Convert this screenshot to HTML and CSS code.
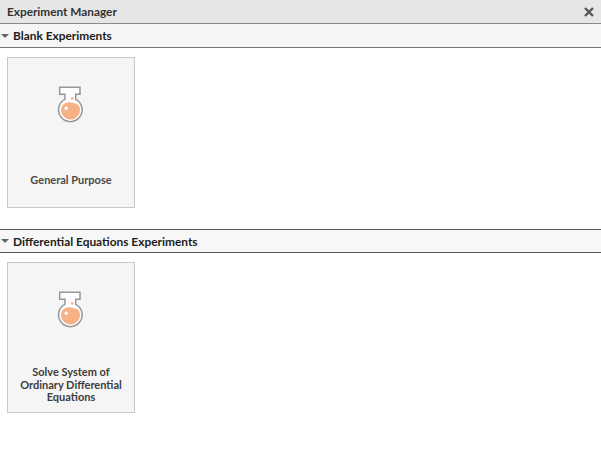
FILE: index.html
```
<!DOCTYPE html>
<html lang="en">
<head>
<meta charset="utf-8">
<title>Experiment Manager</title>
<link rel="stylesheet" href="styles.css">
</head>
<body>
<header class="titlebar">
  <span class="title">Experiment Manager</span>
  <svg class="close" width="10" height="10" viewBox="0 0 10 10"><path d="M1 1L9 9M9 1L1 9" stroke="#555" stroke-width="2.4" fill="none"/></svg>
</header>
<section class="group first">
  <div class="group-head">
    <svg class="caret" width="8" height="4" viewBox="0 0 8 4"><path d="M0 0H8L4 4Z" fill="#666"/></svg>
    <span>Blank Experiments</span>
  </div>
  <div class="cards">
    <div class="card">
      <svg class="flask" width="28" height="38" viewBox="0 0 28 38"><use href="#flask"/></svg>
      <div class="label label-one">General Purpose</div>
    </div>
  </div>
</section>
<section class="group second">
  <div class="group-head">
    <svg class="caret" width="8" height="4" viewBox="0 0 8 4"><path d="M0 0H8L4 4Z" fill="#666"/></svg>
    <span>Differential Equations Experiments</span>
  </div>
  <div class="cards">
    <div class="card short">
      <svg class="flask" width="28" height="38" viewBox="0 0 28 38"><use href="#flask"/></svg>
      <div class="label label-three">Solve System of Ordinary Differential Equations</div>
    </div>
  </div>
</section>
<svg class="defs" width="0" height="0">
  <defs>
    <g id="flask">
      <path d="M2.7 2.2H23V9.2H18.7V14.4A11.8 11.8 0 1 1 8 14.4V9.2H2.7Z" fill="#fff" stroke="#979797" stroke-width="1.5"/>
      <path d="M5.2 20.4C8 17.8 11 17 13.5 17.5C16 18 19 17.8 21.8 20.4A9.5 9.5 0 1 1 5.2 20.4Z" fill="#f7b187"/>
      <circle cx="9.2" cy="23.2" r="1.7" fill="#fff"/>
      <circle cx="15.2" cy="13.4" r="1.3" fill="#f7b187"/>
    </g>
  </defs>
</svg>
</body>
</html>
```
FILE: styles.css
```
html, body {
  margin: 0;
  padding: 0;
  background: #fff;
}
body {
  width: 601px;
  height: 471px;
  overflow: hidden;
  font-family: Lato, "Noto Sans", sans-serif;
  color: #222;
}
.titlebar {
  height: 23px;
  display: flex;
  align-items: center;
  justify-content: space-between;
  padding: 0 7px;
  background: #e6e6e6;
  border-bottom: 1px solid #8a8a8a;
}
.title {
  font-size: 11.8px;
  font-weight: 700;
  color: #333;
}
.close {
  display: block;
}
.group-head {
  height: 23px;
  display: flex;
  align-items: center;
  gap: 4px;
  padding: 0 1px;
  background: #f5f5f5;
  border-bottom: 1px solid #777;
  font-size: 11.9px;
  font-weight: 700;
  color: #1c1c1c;
}
.second .group-head {
  height: 22px;
  background: #f7f7f7;
  border-top: 1px solid #555;
  border-bottom: 1px solid #555;
}
.first {
  height: 205px;
}
.cards {
  padding: 9px 7px;
}
.card {
  box-sizing: border-box;
  width: 128px;
  height: 151px;
  background: #f5f5f5;
  border: 1px solid #c8c8c8;
  display: flex;
  flex-direction: column;
  align-items: center;
}
.card.short {
  height: 151px;
}
.flask {
  display: block;
  margin-top: 27px;
}
.label {
  font-size: 11px;
  font-weight: 700;
  line-height: 12.5px;
  color: #4a4a4a;
  text-align: center;
  width: 112px;
}
.label-one {
  margin-top: 51px;
}
.label-three {
  margin-top: 38px;
  color: #3c3c3c;
}
.defs {
  position: absolute;
}
```
